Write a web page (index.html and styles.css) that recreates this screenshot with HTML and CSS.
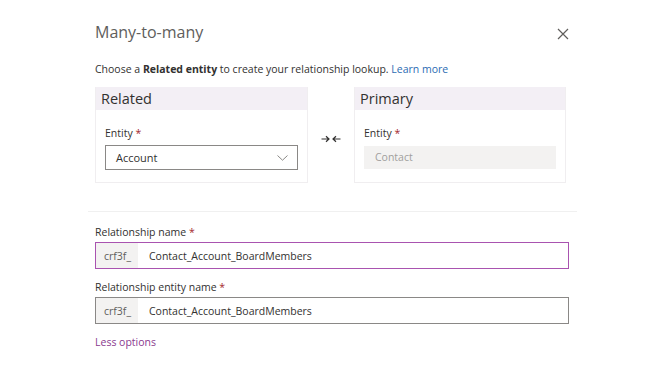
FILE: index.html
```html
<!DOCTYPE html>
<html>
<head>
<meta charset="utf-8">
<link rel="stylesheet" href="styles.css">
</head>
<body>
<div class="dialog">
  <div class="head">
    <h1 class="title">Many-to-many</h1>
    <svg class="close" width="12" height="12" viewBox="0 0 12 12"><path d="M1 1L11 11M11 1L1 11" stroke="#605e5c" stroke-width="1.2" fill="none"/></svg>
  </div>
  <p class="intro">Choose a <b>Related entity</b> to create your relationship lookup. <a class="link">Learn more</a></p>
  <div class="cards">
    <div class="card">
      <div class="card-head">Related</div>
      <div class="card-body">
        <div class="label">Entity <span class="req">*</span></div>
        <div class="select"><span>Account</span>
          <svg width="11" height="6" viewBox="0 0 11 6"><path d="M0.5 0.5L5.5 5.2L10.5 0.5" stroke="#8a8886" stroke-width="1" fill="none"/></svg>
        </div>
      </div>
    </div>
    <div class="arrows">
      <svg width="20" height="8" viewBox="0 0 20 8"><path d="M0.5 4H8M5 1.2L8 4L5 6.8M19.5 4H12M15 1.2L12 4L15 6.8" stroke="#323130" stroke-width="1.2" fill="none"/></svg>
    </div>
    <div class="card card-right">
      <div class="card-head">Primary</div>
      <div class="card-body">
        <div class="label">Entity <span class="req">*</span></div>
        <div class="disabled">Contact</div>
      </div>
    </div>
  </div>
  <div class="divider"></div>
  <div class="fields">
    <div class="field">
      <div class="label">Relationship name <span class="req">*</span></div>
      <div class="input focused"><span class="prefix">crf3f_</span><span class="value">Contact_Account_BoardMembers</span></div>
    </div>
    <div class="field">
      <div class="label">Relationship entity name <span class="req">*</span></div>
      <div class="input"><span class="prefix">crf3f_</span><span class="value">Contact_Account_BoardMembers</span></div>
    </div>
    <a class="less">Less options</a>
  </div>
</div>
</body>
</html>
```
FILE: styles.css
```css
* { box-sizing: border-box; }
body {
  margin: 0;
  background: #fff;
  font-family: "Open Sans", "Noto Sans", sans-serif;
  color: #323130;
}
.dialog {
  width: 489px;
  margin-left: 88px;
  padding-top: 20px;
}
.head {
  display: flex;
  justify-content: space-between;
  align-items: flex-start;
  padding: 0 8px 0 7px;
}
.title {
  margin: 0;
  font-size: 16px;
  font-weight: 400;
  color: #605e5c;
  line-height: 24px;
}
.close { margin-top: 8px; }
.intro {
  margin: 18px 0 0 7px;
  font-size: 10.5px;
  line-height: 14px;
  color: #323130;
}
.intro b { font-weight: 700; }
.link { color: #2b6cb3; }
.cards {
  display: flex;
  margin: 11px 0 0 7px;
  width: 471px;
}
.card {
  width: 213px;
  height: 96px;
  border: 1px solid #f0eef0;
  border-top: none;
}
.card-right { width: 212px; }
.card-head {
  height: 23px;
  background: #f3eff5;
  font-size: 14.5px;
  line-height: 24px;
  padding-left: 5px;
  color: #323130;
}
.card-body {
  padding: 16px 9px 0 9px;
}
.label {
  font-size: 10.5px;
  line-height: 14px;
  color: #323130;
}
.req { color: #a4262c; }
.select {
  margin-top: 5px;
  height: 25px;
  border: 1px solid #8a8886;
  display: flex;
  align-items: center;
  justify-content: space-between;
  padding: 0 9px 0 10px;
  font-size: 11px;
}
.disabled {
  margin-top: 6px;
  height: 23px;
  background: #f3f2f1;
  color: #a19f9d;
  font-size: 10.5px;
  line-height: 23px;
  padding-left: 11px;
}
.arrows {
  width: 46px;
  display: flex;
  justify-content: center;
  align-items: flex-start;
  padding-top: 48px;
}
.arrows svg { display: block; }
.divider {
  height: 1px;
  background: #f0f0f0;
  margin-top: 28px;
}
.fields {
  padding: 13px 8px 0 7px;
}
.field { margin-bottom: 11px; }
.field .label { margin-bottom: 3px; }
.input {
  height: 27px;
  border: 1px solid #8a8886;
  display: flex;
  align-items: stretch;
  font-size: 10.5px;
}
.input.focused { border-color: #a953b0; }
.prefix {
  background: #f3f2f1;
  color: #605e5c;
  width: 42px;
  padding-left: 8px;
  display: flex;
  align-items: center;
}
.value {
  padding-left: 11px;
  display: flex;
  align-items: center;
}
.less {
  display: block;
  font-size: 10.5px;
  color: #8a3a8f;
  margin-top: 0;
}
```
